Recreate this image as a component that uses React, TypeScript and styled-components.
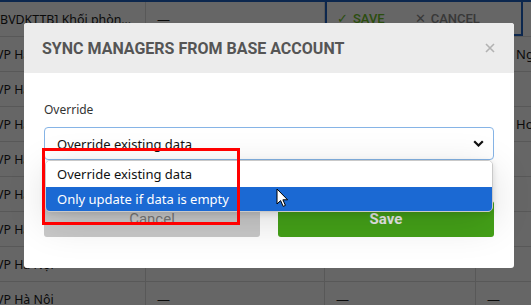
import styled, { createGlobalStyle } from "styled-components";

const GlobalStyle = createGlobalStyle`
  html, body {
    margin: 0;
    padding: 0;
    background: #fff;
  }
  body {
    font-family: "Noto Sans", "Liberation Sans", sans-serif;
  }
`;

const Page = styled.div`
  position: relative;
  width: 531px;
  height: 305px;
  overflow: hidden;
  background: #fff;
`;

// ---------------- background table ----------------
const Table = styled.div`
  display: flex;
  flex-direction: column;
`;

const Row = styled.div<{ $first?: boolean }>`
  display: grid;
  grid-template-columns: 146px 179px 151px 1fr;
  height: ${(p) => (p.$first ? "37px" : "35px")};
  box-sizing: border-box;
  border-bottom: 1px solid #dcdcdc;
  border-top: ${(p) => (p.$first ? "2px solid #1e63c4" : "none")};
`;

const Cell = styled.div<{ $pad?: number; $last?: boolean }>`
  display: flex;
  align-items: center;
  min-width: 0;
  overflow: hidden;
  padding-left: ${(p) => p.$pad ?? 11}px;
  border-right: ${(p) => (p.$last ? "none" : "1px solid #dcdcdc")};
  font-size: 13px;
  color: #1a1a1a;
  white-space: nowrap;
`;

const NameCell = styled(Cell)`
  padding-left: 0;
  padding-right: 10px;
  text-indent: -4px;
`;

const NameText = styled.span`
  overflow: hidden;
  text-overflow: ellipsis;
  font-size: 12.4px;
`;

const ActionsCell = styled.div`
  grid-column: 3 / span 2;
  margin-right: 8px;
  margin-top: -2px;
  display: flex;
  align-items: center;
  gap: 30px;
  padding-left: 10px;
  border: 2px solid #1e63c4;
  font-family: Roboto, "Liberation Sans", sans-serif;
  font-size: 13px;
  font-weight: 500;
  text-transform: uppercase;
`;

const ActionBtn = styled.span<{ $tone: string }>`
  display: flex;
  align-items: center;
  gap: 5px;
  color: ${(p) => p.$tone};
`;

const Overlay = styled.div`
  position: absolute;
  inset: 0;
  background: rgba(0, 0, 0, 0.6);
`;

// ---------------- modal ----------------
const Modal = styled.div`
  position: absolute;
  left: 24px;
  top: 23px;
  width: 490px;
  background: #fff;
  border-radius: 3px;
`;

const Header = styled.div`
  height: 50px;
  display: flex;
  align-items: center;
  justify-content: space-between;
  padding: 0 19px 0 18px;
  background: #ececec;
  border-radius: 3px 3px 0 0;
`;

const Title = styled.h2`
  margin: 0;
  font-family: Roboto, "Liberation Sans", sans-serif;
  font-size: 16px;
  font-weight: 700;
  color: #555;
`;

const CloseBtn = styled.span`
  display: flex;
  width: 10px;
  height: 10px;
`;

const Body = styled.div`
  padding: 28px 20px 31px;
`;

const Label = styled.div`
  font-size: 12px;
  line-height: 18px;
  color: #333;
  margin-bottom: 8px;
`;

const SelectWrap = styled.div`
  position: relative;
  z-index: 2;
`;

const SelectBox = styled.div`
  height: 33px;
  box-sizing: border-box;
  display: flex;
  align-items: center;
  justify-content: space-between;
  padding: 0 9px 0 12px;
  border: 1px solid #86b4e6;
  border-radius: 4px;
  font-size: 13px;
  color: #111;
`;

const Menu = styled.div`
  position: absolute;
  top: 100%;
  left: 1px;
  right: 1px;
  background: #fff;
  border: 1px solid #c9c9c9;
  border-radius: 5px;
  overflow: hidden;
  box-shadow: 0 10px 40px rgba(0, 0, 0, 0.14), 0 2px 6px rgba(0, 0, 0, 0.12);
`;

const Option = styled.div<{ $active?: boolean }>`
  height: ${(p) => (p.$active ? 24 : 26)}px;
  display: flex;
  align-items: center;
  padding-left: 11px;
  font-size: 13px;
  background: ${(p) => (p.$active ? "#1b69d3" : "#fff")};
  color: ${(p) => (p.$active ? "#fff" : "#111")};
`;

const Buttons = styled.div`
  display: grid;
  grid-template-columns: 1fr 1fr;
  gap: 18px;
  margin-top: 41px;
`;

const Button = styled.div<{ $primary?: boolean }>`
  height: 36px;
  display: flex;
  align-items: center;
  justify-content: center;
  padding-bottom: 1px;
  box-sizing: border-box;
  border-radius: 3px;
  font-family: Roboto, "Liberation Sans", sans-serif;
  font-size: 15px;
  font-weight: ${(p) => (p.$primary ? 700 : 400)};
  background: ${(p) => (p.$primary ? "#44a118" : "#c9c9c9")};
  color: ${(p) => (p.$primary ? "#e8e8e8" : "#777")};
`;

// ---------------- annotations ----------------
const Highlight = styled.div`
  position: absolute;
  left: 42px;
  top: 148px;
  width: 198px;
  height: 77px;
  box-sizing: border-box;
  border: 3px solid #ff0000;
  z-index: 5;
`;

const Cursor = styled.svg`
  position: absolute;
  left: 276px;
  top: 188px;
  z-index: 6;
`;

const rows = [
  { right: "Ng", pad: 40 },
  {},
  { right: "Ho", pad: 40 },
  {},
  {},
  {},
  {},
];

const App = () => {
  return (
    <Page>
      <GlobalStyle />
      <Table>
        <Row $first>
          <NameCell>
            <NameText>[BVDKTTB] Khối phòng chức năng</NameText>
          </NameCell>
          <Cell>—</Cell>
          <ActionsCell>
            <ActionBtn $tone="#6cc226">
              <span>✓</span>Save
            </ActionBtn>
            <ActionBtn $tone="#8c8c8c">
              <span>✕</span>Cancel
            </ActionBtn>
          </ActionsCell>
        </Row>
        {rows.map((r, idx: number) => (
          <Row key={idx}>
            <NameCell>
              <NameText>VP Hà Nội</NameText>
            </NameCell>
            <Cell />
            <Cell />
            <Cell $last $pad={r.pad}>
              {r.right}
            </Cell>
          </Row>
        ))}
        <Row>
          <NameCell>
            <NameText>VP Hà Nội</NameText>
          </NameCell>
          <Cell>—</Cell>
          <Cell>—</Cell>
          <Cell $last>—</Cell>
        </Row>
      </Table>
      <Overlay />

      <Modal>
        <Header>
          <Title>SYNC MANAGERS FROM BASE ACCOUNT</Title>
          <CloseBtn>
            <svg width="10" height="10" viewBox="0 0 10 10">
              <path d="M1 1L9 9M9 1L1 9" stroke="#b2b2b2" strokeWidth="1.6" />
            </svg>
          </CloseBtn>
        </Header>
        <Body>
          <Label>Override</Label>
          <SelectWrap>
            <SelectBox>
              <span>Override existing data</span>
              <svg width="11" height="7" viewBox="0 0 11 7">
                <path d="M1.2 1.2L5.5 5.5L9.8 1.2" fill="none" stroke="#111" strokeWidth="2.2" />
              </svg>
            </SelectBox>
            <Menu>
              <Option>Override existing data</Option>
              <Option $active>Only update if data is empty</Option>
            </Menu>
          </SelectWrap>
          <Buttons>
            <Button>Cancel</Button>
            <Button $primary>Save</Button>
          </Buttons>
        </Body>
      </Modal>

      <Highlight />
      <Cursor width="13" height="20" viewBox="0 0 13 20">
        <path
          d="M1 1L1 16L4.6 12.6L7.2 18.4L9.4 17.4L6.9 11.8L11.6 11.8Z"
          fill="#fff"
          stroke="#000"
          strokeWidth="1"
          strokeLinejoin="round"
        />
      </Cursor>
    </Page>
  );
};

export default App;
